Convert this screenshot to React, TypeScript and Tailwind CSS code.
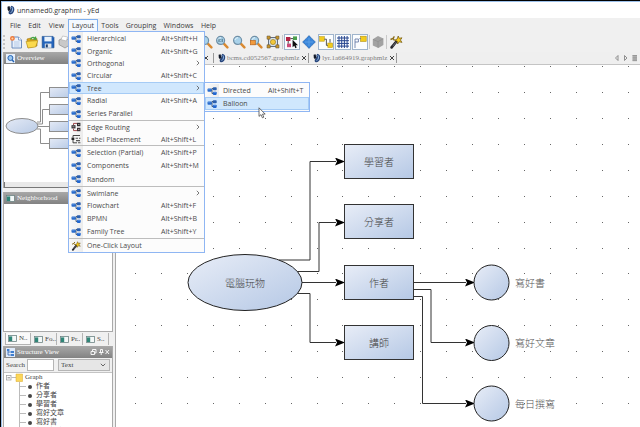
import React from 'react';

interface MenuEntry {
  label: string;
  keys?: string;
  sub?: boolean;
  active?: boolean;
  icon?: 'layout' | 'edge' | 'label' | 'wand';
  size?: string;
}

const menuGroups: MenuEntry[][] = [
  [
    { label: 'Hierarchical', keys: 'Alt+Shift+H' },
    { label: 'Organic', keys: 'Alt+Shift+G', size: 'h-3' },
    { label: 'Orthogonal', sub: true, size: 'h-3' },
    { label: 'Circular', keys: 'Alt+Shift+C' },
    { label: 'Tree', sub: true, active: true, size: 'h-3' },
    { label: 'Radial', keys: 'Alt+Shift+A' },
    { label: 'Series Parallel' },
  ],
  [
    { label: 'Edge Routing', sub: true, icon: 'edge', size: 'h-3' },
    { label: 'Label Placement', keys: 'Alt+Shift+L', icon: 'label', size: 'h-3' },
  ],
  [
    { label: 'Selection (Partial)', keys: 'Alt+Shift+P' },
    { label: 'Components', keys: 'Alt+Shift+M' },
    { label: 'Random', size: 'h-3.5' },
  ],
  [
    { label: 'Swimlane', sub: true, size: 'h-3' },
    { label: 'Flowchart', keys: 'Alt+Shift+F' },
    { label: 'BPMN', keys: 'Alt+Shift+B' },
    { label: 'Family Tree', keys: 'Alt+Shift+Y' },
  ],
  [{ label: 'One-Click Layout', icon: 'wand' }],
];

const treeItems = ['作者', '分享者', '學習者', '寫好文章', '寫好書', '每日撰寫'];

const LayoutIcon = () => (
  <svg viewBox="0 0 10 10" className="h-2.5 w-2.5 shrink-0">
    <path d="M3 4.5H5M5 2.5V7.5M5 2.5H7M5 7.5H7" fill="none" stroke="#345" strokeWidth="0.8" />
    <rect x="0.5" y="2.6" width="4.3" height="3.2" rx="0.8" fill="#2a6ccc" />
    <rect x="5.8" y="1.2" width="3.9" height="3.1" rx="0.8" fill="#2b5fae" />
    <rect x="5.8" y="5.8" width="3.9" height="3.1" rx="0.8" fill="#2166cf" />
    <path d="M1 3.2H3.6M6.4 6.4H9" stroke="#7fb0ee" strokeWidth="0.5" />
  </svg>
);

const EdgeIcon = () => (
  <svg viewBox="0 0 10 10" className="h-2.5 w-2.5 shrink-0">
    <rect x="0.5" y="3.2" width="4" height="3.2" fill="#2c2c30" />
    <rect x="6" y="0.8" width="3.4" height="3.4" fill="#2c2c30" />
    <rect x="6" y="5.8" width="3.4" height="3.4" fill="#3b3033" />
    <path d="M2.5 3V1.4H6M2.5 6.6V8.6H6" fill="none" stroke="#a0484c" strokeWidth="1" />
    <path d="M1.4 4.8H3.6M7 2.5H8.5M7 7.5H8.5" stroke="#c9b3b3" strokeWidth="0.8" />
  </svg>
);

const LabelIcon = () => (
  <svg viewBox="0 0 10 10" className="h-2.5 w-2.5 shrink-0">
    <rect x="0.5" y="3.6" width="2.8" height="2.4" fill="#222" />
    <path d="M2 3.6V1.5H9M2 6V8.8H6" fill="none" stroke="#333" strokeWidth="0.9" />
    <path d="M4.6 4.2H7M5 6.6H9M8 4.2H9.4M7 8.8H9.4" stroke="#555" strokeWidth="1.1" />
  </svg>
);

const WandIcon = ({ className }: { className: string }) => (
  <svg viewBox="0 0 14 14" className={className}>
    <path d="M2.6 12.4L7.6 6.2" stroke="#26262c" strokeWidth="2.6" strokeLinecap="round" />
    <path d="M3.8 11.2L7 7.2" stroke="#8b8b96" strokeWidth="0.7" />
    <path d="M9.2 1L10.3 3.3L13 2.8L11.4 5L13 7.4L10.2 6.8L8.6 9L8.2 6.2L5.6 5.2L8.2 4Z" fill="#f2c81e" stroke="#6d5310" strokeWidth="0.7" />
    <path d="M1.5 4.5L4 3.4L5.4 1.4M4 3.4L5.4 5.4" fill="none" stroke="#8a6d1a" strokeWidth="1.4" />
  </svg>
);

const YedIcon = ({ className }: { className: string }) => (
  <svg viewBox="0 0 10 12" className={className}>
    <path d="M5.5 0.8C8.6 1.4 9.6 4 8.8 7C8 10.2 5.6 11.8 3.4 11.2C1.8 10.6 1.6 8.6 3 7.2C4.4 5.8 4.8 4.2 4.2 2.6Z" fill="#27457c" />
    <path d="M0.8 2L3.2 1.2L4.2 5L2.6 8L1 5.6Z" fill="#111827" />
    <path d="M6 2.6C7.6 4.2 7 7.6 4.6 9.4" fill="none" stroke="#9cc3ea" strokeWidth="1.2" />
  </svg>
);

const entryIcon = (icon?: string) => {
  if (icon === 'edge') return <EdgeIcon />;
  if (icon === 'label') return <LabelIcon />;
  if (icon === 'wand') return <WandIcon className="h-2.5 w-2.5 shrink-0" />;
  return <LayoutIcon />;
};

const MenuRow = ({ entry, shortcutWidth }: { entry: MenuEntry; shortcutWidth: string }) => (
  <button
    role="menuitem"
    className={`flex w-full items-center text-left ${entry.size || 'h-[13px]'} ${
      entry.active ? 'bg-[#d0e7fd] outline-1 -outline-offset-1 outline-[#a5cbf5]' : ''
    }`}
  >
    <span className={`flex h-full w-3.5 items-center justify-center ${entry.active ? '' : 'bg-gradient-to-r from-[#fafafa] to-[#ececec]'}`}>
      {entryIcon(entry.icon)}
    </span>
    <span className="flex-1 pl-1 whitespace-nowrap">{entry.label}</span>
    {entry.sub ? (
      <svg viewBox="0 0 4 6" className="mr-1 h-1.5 w-1">
        <path d="M0.8 0.8L3 3L0.8 5.2" fill="none" stroke="#555" strokeWidth="0.8" />
      </svg>
    ) : (
      entry.keys && <span className={`${shortcutWidth} whitespace-nowrap`}>{entry.keys}</span>
    )}
  </button>
);

const LayoutMenu = () => (
  <div role="menu" className="absolute top-full left-0 z-20 w-[137px] border border-[#8fb6f3] bg-[#fcfcfc] text-[#4a4a4a]">
    {menuGroups.map((group, i) => (
      <div key={i} className={i > 0 ? 'border-t border-[#bdbdbd]' : ''}>
        {group.map((entry) => (
          <div key={entry.label} className="relative">
            <MenuRow entry={entry} shortcutWidth="w-[43px]" />
            {entry.label === 'Tree' && <TreeSubmenu />}
          </div>
        ))}
      </div>
    ))}
  </div>
);

const TreeSubmenu = () => (
  <div role="menu" className="absolute top-0 left-full w-[106px] border border-[#8fb6f3] bg-[#fcfcfc] py-px">
    <MenuRow entry={{ label: 'Directed', keys: 'Alt+Shift+T' }} shortcutWidth="w-[41px]" />
    <MenuRow entry={{ label: 'Balloon', active: true }} shortcutWidth="w-[41px]" />
    {/* mouse pointer */}
    <svg viewBox="0 0 8 12" className="absolute top-6 left-[53px] h-3 w-2">
      <path d="M1 0.8V9.4L3 7.6L4.4 10.8L5.8 10.2L4.5 7.1H7.2Z" fill="#fff" stroke="#333" strokeWidth="0.7" />
    </svg>
  </div>
);

const MenuBar = () => {
  const item = 'h-3 whitespace-nowrap';
  return (
    <nav className="flex h-[13px] items-end bg-[#f0f0f0] pl-[5px] text-[#3c3c3c]">
      <button className={`${item} w-[17px]`}>File</button>
      <button className={`${item} w-[21px]`}>Edit</button>
      <button className={`${item} w-[23px]`}>View</button>
      <div className="relative">
        <button className="h-3 w-[30px] border border-b-0 border-[#7fb0ee] bg-[#f4f9ff]">Layout</button>
        <LayoutMenu />
      </div>
      <button className={`${item} w-6`}>Tools</button>
      <button className={`${item} w-[38px]`}>Grouping</button>
      <button className={`${item} w-[37px]`}>Windows</button>
      <button className={`${item} w-[23px]`}>Help</button>
    </nav>
  );
};

const Magnifier = ({ children }: { children?: React.ReactNode }) => (
  <svg viewBox="0 0 14 14" className="h-3.5 w-3.5">
    <path d="M8.6 8.4L12.4 12.4" stroke="#d98a32" strokeWidth="2.4" strokeLinecap="round" />
    <circle cx="5.6" cy="5.4" r="4" fill="#a9d2ea" stroke="#6f8fa6" strokeWidth="1.2" />
    <path d="M3 5C3.4 3.4 4.6 2.6 6 2.8" fill="none" stroke="#e6f5fc" strokeWidth="1" />
    {children}
  </svg>
);

interface ToolButtonProps {
  name: string;
  on?: boolean;
  narrow?: boolean;
  children: React.ReactNode;
}

const ToolButton = ({ name, on, narrow, children }: ToolButtonProps) => (
  <button
    aria-label={name}
    className={`flex h-4 shrink-0 items-center justify-center ${narrow ? 'w-3.5' : 'w-4'} ${
      on ? 'border border-[#9fb4cc] bg-[#fbfdff]' : ''
    }`}
  >
    {children}
  </button>
);

const Toolbar = () => (
  <div className="flex h-[21px] items-center bg-[#f0f0f0] pl-px">
    <span className="mr-px h-3.5 border-l-2 border-dotted border-[#c4c4c4]" />
    <div className="flex w-[192px] pl-0.5">
      <ToolButton name="New">
        <svg viewBox="0 0 14 14" className="h-3.5 w-3.5">
          <path d="M3 2H9.5L12.5 5V13H3Z" fill="#e8f0fb" stroke="#5f82b8" strokeWidth="0.9" />
          <path d="M9.5 2V5H12.5" fill="#fff" stroke="#5f82b8" strokeWidth="0.7" />
          <path d="M5 7H10.5M5 9H10.5M5 11H10.5" stroke="#a9c0e2" strokeWidth="0.8" />
          <circle cx="3.4" cy="3.4" r="2.4" fill="#f07b3c" />
          <circle cx="3.4" cy="3.4" r="1" fill="#ffd6a8" />
        </svg>
      </ToolButton>
      <ToolButton name="Open">
        <svg viewBox="0 0 14 14" className="h-3.5 w-3.5">
          <path d="M2 4L6 3L7 4.5L12 3.6V11L3 12.8Z" fill="#dca41b" stroke="#9a740d" strokeWidth="0.6" />
          <path d="M1 6.4L12.8 5.6L10.6 12L3 13Z" fill="#fbd94c" stroke="#b08a16" strokeWidth="0.6" />
          <path d="M5 4.6C5.4 2 8 0.9 9.8 2.2L11 1L11.6 5L7.8 4.4L8.8 3.2C7.6 2.8 6.8 3.4 6.6 4.8Z" fill="#46a546" />
        </svg>
      </ToolButton>
      <ToolButton name="Save">
        <svg viewBox="0 0 14 14" className="h-3.5 w-3.5">
          <path d="M1.2 1.4H12L13 2.4V12.8H1.2Z" fill="#2464bb" stroke="#174886" strokeWidth="0.6" />
          <rect x="3.4" y="1.8" width="7.2" height="4.6" fill="#e9f2fb" />
          <rect x="3.8" y="8.6" width="6.6" height="4.2" fill="#dfe5ec" />
          <rect x="4.8" y="9.4" width="2" height="3" fill="#1d3f70" />
        </svg>
      </ToolButton>
      <ToolButton name="Print">
        <svg viewBox="0 0 14 14" className="h-3.5 w-3.5">
          <path d="M2 5L6 3L12 4.6V10.4L8 13L2 9.6Z" fill="#c9c9c9" stroke="#8b8b8b" strokeWidth="0.7" />
          <path d="M4 4.6L5.6 1L10.6 2L9.4 6Z" fill="#fff" stroke="#aaa" strokeWidth="0.6" />
        </svg>
      </ToolButton>
    </div>
    <ToolButton name="Zoom in"><Magnifier /></ToolButton>
    <div className="flex flex-1 items-center gap-px">
      <ToolButton name="Zoom 1:1">
        <Magnifier><path d="M4 3.8V7M5.6 4.4V4.9M5.6 6V6.5M7.2 3.8V7" stroke="#356" strokeWidth="0.8" /></Magnifier>
      </ToolButton>
      <ToolButton name="Zoom"><Magnifier /></ToolButton>
      <ToolButton name="Zoom to area">
        <Magnifier><rect x="1.5" y="5.6" width="4.8" height="4.2" fill="#f29b3c" stroke="#c2681b" strokeWidth="0.7" /></Magnifier>
      </ToolButton>
      <ToolButton name="Fit content">
        <svg viewBox="0 0 14 14" className="h-3.5 w-3.5">
          <rect x="2.6" y="2.6" width="8.8" height="8.8" fill="#dbe7f5" stroke="#4e5a6c" strokeWidth="0.9" />
          <circle cx="7" cy="7" r="2.6" fill="#f2c83c" stroke="#947312" strokeWidth="0.6" />
          <path d="M1 1H4.2V4.2H1ZM9.8 1H13V4.2H9.8ZM1 9.8H4.2V13H1ZM9.8 9.8H13V13H9.8Z" fill="#c9962c" stroke="#5b4f38" strokeWidth="0.5" />
        </svg>
      </ToolButton>
      <span className="h-3.5 border-l border-[#c9c9c9]" />
      <ToolButton name="Edit mode" on>
        <svg viewBox="0 0 14 14" className="h-3.5 w-3.5">
          <rect x="1" y="2" width="4.4" height="4" fill="#b32545" />
          <rect x="8" y="1.4" width="4" height="3.6" fill="#4ba04e" />
          <rect x="2" y="8.6" width="4" height="3.6" fill="#cb4c79" />
          <path d="M3.2 6V8.6M5.4 3.6H8" stroke="#333" strokeWidth="0.9" />
          <path d="M7.6 4.8V12.2L9.3 10.8L10.4 13.2L11.7 12.6L10.7 10.3H13Z" fill="#111" />
        </svg>
      </ToolButton>
      <ToolButton name="Navigation mode">
        <svg viewBox="0 0 14 14" className="h-3.5 w-3.5">
          <path d="M7 0.6L10 3.8L13.4 7L10 10.2L7 13.4L4 10.2L0.6 7L4 3.8Z" fill="#3a86da" stroke="#1f5ca8" strokeWidth="0.6" />
          <path d="M7 3V11M3 7H11" stroke="#5d9fe4" strokeWidth="1" />
        </svg>
      </ToolButton>
      <ToolButton name="Orthogonal edges" on>
        <svg viewBox="0 0 14 14" className="h-3.5 w-3.5">
          <rect x="0.6" y="1.6" width="4.8" height="4.6" fill="#f2cb1d" stroke="#b18f0c" strokeWidth="0.5" />
          <rect x="8.8" y="8" width="4.8" height="4.6" fill="#f2cb1d" stroke="#b18f0c" strokeWidth="0.5" />
          <path d="M5.4 4.2H7.4V10.4H8.8M11 4V7.6" fill="none" stroke="#444" strokeWidth="0.9" />
        </svg>
      </ToolButton>
      <ToolButton name="Grid" on>
        <svg viewBox="0 0 14 14" className="h-3.5 w-3.5">
          <path d="M1 3H13M1 5.7H13M1 8.4H13M1 11.1H13M3 1V13M5.7 1V13M8.4 1V13M11.1 1V13" stroke="#27468f" strokeWidth="1" />
        </svg>
      </ToolButton>
      <ToolButton name="Snap lines" on>
        <svg viewBox="0 0 14 14" className="h-3.5 w-3.5">
          <rect x="7.6" y="1.2" width="5.6" height="5.2" fill="#f2cb1d" stroke="#b18f0c" strokeWidth="0.6" />
          <path d="M2 13V4H5.4V7H2M6.4 3.6H8" fill="none" stroke="#5b6fa0" strokeWidth="0.8" />
        </svg>
      </ToolButton>
      <span className="h-3.5 border-l border-[#c9c9c9]" />
      <ToolButton name="Group" narrow>
        <svg viewBox="0 0 14 14" className="h-3.5 w-3.5">
          <path d="M7 1L12.4 3.6V10L7.4 13L1.8 10.6V4.2Z" fill="#a2a2a2" />
          <path d="M2 4.4L7 6.6L12.2 3.8M7 6.6V12.6" fill="none" stroke="#919191" strokeWidth="0.8" />
        </svg>
      </ToolButton>
      <span className="h-3.5 border-l border-[#c9c9c9]" />
      <ToolButton name="One-Click Layout">
        <WandIcon className="h-3.5 w-3.5" />
      </ToolButton>
    </div>
  </div>
);

const PanelHeader = ({ title, children, tools }: { title: string; children: React.ReactNode; tools?: boolean }) => (
  <header className="flex h-3 shrink-0 items-center gap-0.5 bg-gradient-to-b from-[#a8a8a8] to-[#828282] px-0.5 font-['Liberation_Serif',serif] text-[7px] text-white">
    {children}
    <h2 className="flex-1 whitespace-nowrap">{title}</h2>
    {tools && (
      <svg viewBox="0 0 20 8" className="h-2 w-5" fill="none" stroke="#fff" strokeWidth="0.9">
        <path d="M1 3.5H4.5V6.5H1ZM2.5 3V1.5H6V5H5M10.5 1.5V4.5M9 4.5H13.5M12.5 1.5V4.5M10.5 1.5H12.5M11.2 4.5V7M15.5 2L19 6M19 2L15.5 6" />
      </svg>
    )}
  </header>
);

const WindowGlyph = () => (
  <svg viewBox="0 0 9 7" className="h-[7px] w-[9px] shrink-0">
    <rect x="0.5" y="0.5" width="8" height="6" fill="#f4f8f8" stroke="#6d8484" strokeWidth="0.8" />
    <rect x="1" y="1.4" width="3.2" height="4.6" fill="#2f8577" />
  </svg>
);

const Overview = () => (
  <svg className="h-[118px] w-full bg-white" fill="none" stroke="#8e8e8e">
    <defs>
      <linearGradient id="mini" x1="0" y1="0" x2="1" y2="1">
        <stop offset="0" stopColor="#e4eaf6" />
        <stop offset="1" stopColor="#b9cbe6" />
      </linearGradient>
    </defs>
    <path d="M33 58H36.5V28.5H46M33 60H38.5V45.5H46M34 62.5H46M33 65H36.5V79.5H46" />
    <ellipse cx="18" cy="62" rx="16" ry="7.5" fill="url(#mini)" />
    <rect x="45.5" y="23.5" width="20" height="10" fill="url(#mini)" />
    <rect x="45.5" y="40.5" width="20" height="10" fill="url(#mini)" />
    <rect x="45.5" y="57.5" width="20" height="10" fill="url(#mini)" />
    <rect x="45.5" y="74.5" width="20" height="10" fill="url(#mini)" />
  </svg>
);

const Sidebar = () => (
  <aside className="flex w-[113px] shrink-0 flex-col overflow-hidden border-r border-[#a9a9a9] bg-[#f0f0f0] pr-0.5 font-['Liberation_Serif','Noto_Sans_CJK_TC',serif] text-[7px] text-[#444]">
    <section className="border-x border-[#a9a9a9]">
      <PanelHeader title="Overview">
        <svg viewBox="0 0 9 9" className="h-[9px] w-[9px]">
          <rect width="9" height="9" fill="#e7f0fb" />
          <circle cx="4.4" cy="4" r="2.5" fill="#9cc8ef" stroke="#2462b4" strokeWidth="1" />
          <path d="M6.2 6L8 8" stroke="#2462b4" strokeWidth="1.4" />
        </svg>
      </PanelHeader>
      <Overview />
      <div className="h-1.5 border-b border-l border-[#777] bg-[#e9e9e9]" />
    </section>
    <section className="mt-1 border border-t-0 border-[#a9a9a9] bg-white">
      <PanelHeader title="Neighborhood">
        <WindowGlyph />
      </PanelHeader>
      <div className="h-[127px]" />
    </section>
    <div className="flex h-3.5 shrink-0 items-center">
      {['N..', 'Fo..', 'Pr..', 'S..'].map((tab, i) => (
        <button
          key={tab}
          className={`flex h-3 shrink-0 items-center gap-0.5 border-r border-[#b4b4b4] ${
            i === 0 ? 'ml-0.5 w-[26px] border border-t-0 bg-[#fafafa] pl-0.5' : 'w-[26px] pl-[3px]'
          }`}
        >
          <WindowGlyph />
          <span className="whitespace-nowrap">{tab}</span>
        </button>
      ))}
    </div>
    <section className="flex min-h-0 flex-1 flex-col border-x border-[#a9a9a9]">
      <PanelHeader title="Structure View" tools>
        <svg viewBox="0 0 9 9" className="h-[9px] w-[9px]">
          <rect width="9" height="9" fill="#dfeafa" />
          <path d="M2 1.5V7H5M2 4H5" fill="none" stroke="#2c62ad" strokeWidth="0.8" />
          <path d="M1 1H3.4V3H1ZM5 3H8V5H5ZM5 6H8V8H5Z" fill="#3f7ed0" />
        </svg>
      </PanelHeader>
      <div className="flex h-3.5 shrink-0 items-center gap-0.5 px-0.5">
        <label htmlFor="search">Search</label>
        <input id="search" className="h-3 w-[27px] border border-[#b5b5b5] bg-white" />
        <div className="relative ml-0.5 flex-1">
          <select aria-label="Search by" className="block h-3 w-full appearance-none border border-[#b5b5b5] bg-[#e6e6e6] pl-0.5 leading-none">
            <option>Text</option>
          </select>
          <svg viewBox="0 0 6 4" className="absolute top-1 right-1 h-1 w-1.5">
            <path d="M0.8 0.8L3 3L5.2 0.8" fill="none" stroke="#444" strokeWidth="0.8" />
          </svg>
        </div>
      </div>
      <div className="flex-1 overflow-hidden border-t border-[#c4c4c4] bg-white pl-0.5">
        <div className="flex h-[9px] items-center gap-0.5">
          <svg viewBox="0 0 17 9" className="h-[9px] w-[17px]">
            <path d="M5.5 4.5H10" stroke="#bbb" />
            <rect x="0.5" y="2.5" width="4.5" height="4.5" fill="#fff" stroke="#999" strokeWidth="0.7" />
            <path d="M1.5 4.8H4" stroke="#555" strokeWidth="0.7" />
            <path d="M10 1H16.5V8.5H10Z" fill="#fbd65a" stroke="#d8a92c" strokeWidth="0.5" />
          </svg>
          <span>Graph</span>
        </div>
        <ul className="ml-[13px] border-l border-[#bbb]">
          {treeItems.map((item) => (
            <li key={item} className="flex h-[9px] items-center">
              <span className="w-1.5 border-t border-[#bbb]" />
              <span className="ml-0.5 h-1 w-1 rounded-full bg-[#444]" />
              <span className="ml-1 leading-none whitespace-nowrap">{item}</span>
            </li>
          ))}
        </ul>
      </div>
    </section>
  </aside>
);

const CloseGlyph = () => (
  <svg viewBox="0 0 6 6" className="h-1.5 w-1.5">
    <path d="M1 1L5 5M5 1L1 5" stroke="#444" strokeWidth="1" />
  </svg>
);

const FileTab = ({ name }: { name: string }) => (
  <div className="flex h-2.5 items-center border-r border-[#999] pr-px pl-1">
    <YedIcon className="h-2.5 w-2" />
    <button className="ml-px whitespace-nowrap">{name}</button>
    <button aria-label="Close" className="ml-0.5">
      <CloseGlyph />
    </button>
  </div>
);

const TabBar = () => (
  <div className="flex h-[13px] shrink-0 items-center border-b border-[#c4c4c4] bg-[#efefef] font-['Liberation_Serif',serif] text-[7px] text-[#808080]">
    <div className="flex h-2.5 w-[98px] items-center justify-between border-r border-[#999] pr-1 pl-1">
      <button>unnamed0.graphml</button>
      <CloseGlyph />
    </div>
    <FileTab name="bcms.cd052567.graphmlz" />
    <FileTab name="lyr.1a664919.graphmlz" />
    <svg viewBox="0 0 24 8" className="mr-0.5 ml-auto h-2 w-6">
      <path d="M4 1.5L1.5 4L4 6.5ZM10.5 1.5L13 4L10.5 6.5Z" fill="none" stroke="#777" strokeWidth="0.8" />
      <path d="M18.5 1H23V7H18.5Z" fill="#b9b9b9" />
      <path d="M18.5 1.5H23M18.5 3.2H23M18.5 5H23M18.5 6.7H23" stroke="#888" strokeWidth="0.7" />
    </svg>
  </div>
);

const boxes = [
  { label: '學習者', y: 79 },
  { label: '分享者', y: 139 },
  { label: '作者', y: 200 },
  { label: '講師', y: 260 },
];

const circles = [
  { label: '寫好書', y: 217.5 },
  { label: '寫好文章', y: 278 },
  { label: '每日撰寫', y: 338.5 },
];

const edges = [
  'M163 195H194V96.5H220',
  'M181 206.5H203V157.5H220',
  'M186 217.5H220',
  'M181 228.5H194V277.5H220',
  'M298 217.5H350',
  'M298 224.5H315V277.5H350',
  'M298 231.5H306.5V338.5H350',
];

const GRID = 25.93;
const gridDots: { x: number; y: number }[] = [];
for (let row = 0; row < 40; row++) {
  for (let col = 0; col < 60; col++) {
    gridDots.push({ x: Math.round(19 + col * GRID), y: Math.round(1 + row * GRID) });
  }
}

const GraphCanvas = () => (
  <svg className="min-h-0 w-full flex-1 bg-white font-['Noto_Sans_CJK_TC',sans-serif] text-[10px] font-light">
    <defs>
      <linearGradient id="node" x1="0" y1="0" x2="1" y2="1">
        <stop offset="0" stopColor="#e8edf7" />
        <stop offset="1" stopColor="#b5c8e5" />
      </linearGradient>
      <marker id="arrow" viewBox="0 0 10 8" refX="1" refY="4" markerWidth="10" markerHeight="8" markerUnits="userSpaceOnUse">
        <path d="M0 0L10 4L0 8L2 4Z" fill="#000" />
      </marker>
    </defs>
    {gridDots.map((d) => (
      <rect key={`${d.x}-${d.y}`} x={d.x} y={d.y} width="1" height="1" fill="#666" />
    ))}
    {edges.map((d) => (
      <path key={d} d={d} fill="none" stroke="#333" markerEnd="url(#arrow)" />
    ))}
    <ellipse cx="129" cy="217.5" rx="57" ry="28" fill="url(#node)" stroke="#222" />
    <text x="129" y="222" textAnchor="middle" fill="#444">電腦玩物</text>
    {boxes.map((b) => (
      <g key={b.label}>
        <rect x="228.5" y={b.y + 0.5} width="69" height="34" fill="url(#node)" stroke="#333" />
        <text x="263" y={b.y + 22} textAnchor="middle" fill="#444">{b.label}</text>
      </g>
    ))}
    {circles.map((c) => (
      <g key={c.label}>
        <circle cx="375.5" cy={c.y} r="17.5" fill="url(#node)" stroke="#222" />
        <text x="399" y={c.y + 4} fill="#555">{c.label}</text>
      </g>
    ))}
  </svg>
);

export default function App() {
  return (
    <div className="flex h-screen flex-col overflow-hidden border-t border-l border-black bg-[#f0f0f0] font-['Open_Sans','Noto_Sans',sans-serif] text-[7px] leading-none">
      <div className="flex min-h-0 flex-1 flex-col border-t border-l border-[#9cc0ea]">
        <div className="flex h-4 shrink-0 items-center gap-px bg-white pl-1 text-[#333]">
          <YedIcon className="h-2.5 w-2.5" />
          <h1>unnamed0.graphml - yEd</h1>
        </div>
        <MenuBar />
        <Toolbar />
        <div className="flex min-h-0 flex-1 pl-px">
          <Sidebar />
          <main className="flex min-w-0 flex-1 flex-col">
            <TabBar />
            <GraphCanvas />
          </main>
        </div>
      </div>
    </div>
  );
}
